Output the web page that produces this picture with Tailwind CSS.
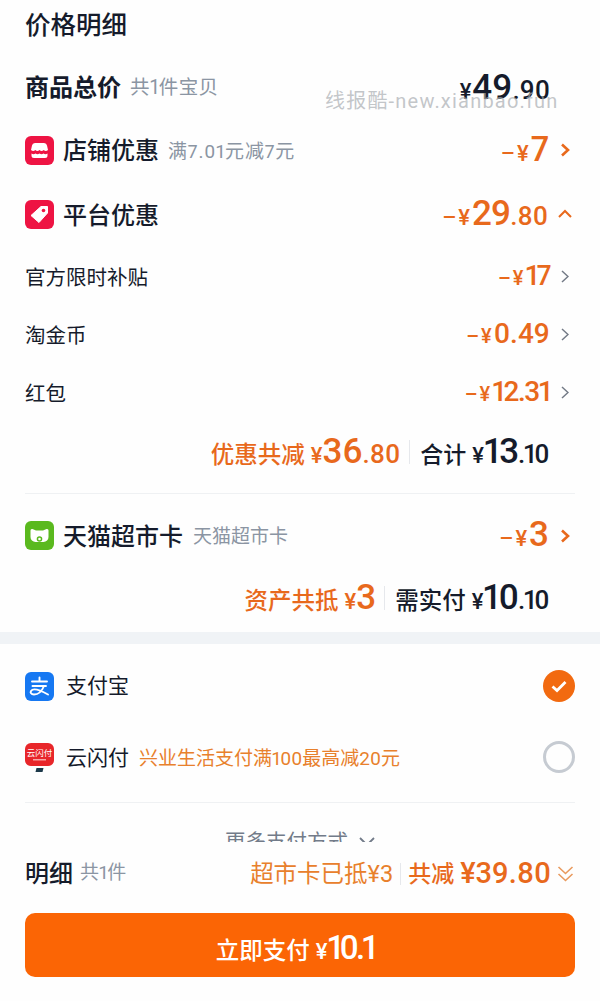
<!DOCTYPE html>
<html lang="zh-CN">
<head>
<meta charset="utf-8">
<title>价格明细</title>
<script src="https://cdn.jsdelivr.net/npm/@tailwindcss/browser@4"></script>
</head>
<body>
<div class="relative w-[600px] h-[1001px] overflow-hidden bg-[#fefefe] text-[#151b2b] proportional-nums font-['Roboto','Noto_Sans_CJK_SC',sans-serif]">

  <!-- title -->
  <div class="h-[57px] px-[25px] pb-[7px] flex items-center text-[25.500px] font-medium">价格明细</div>

  <!-- goods total -->
  <div class="h-[62px] pl-[25px] pr-[50px] flex items-center justify-between">
    <div class="flex items-center gap-[9px]">
      <span class="text-[24px] font-bold">商品总价</span>
      <span class="text-[19.500px] tracking-[0.4px] text-[#8b95a3]">共1件宝贝</span>
    </div>
    <div class="flex items-baseline font-medium">
      <span class="text-[22px] mr-px">¥</span><span class="text-[35px]">49</span><span class="text-[26px]">.90</span>
    </div>
  </div>

  <!-- shop discount -->
  <div class="h-[62px] pl-[25px] pr-[30px] flex items-center justify-between">
    <div class="flex items-center">
      <svg class="w-[29px] h-[29px] mr-[9px]" viewBox="0 0 29 29">
        <rect width="29" height="29" rx="6" fill="#ee1443"/>
        <path d="M10 7h9a3 3 0 0 1 3 2.500l1 4.500q-2.200 2-4.300 0-2.100 2-4.200 0-2.100 2-4.200 0-2.100 2-4.300 0l1-4.500a3 3 0 0 1 3-2.500z" fill="#fff"/>
        <path d="M6.500 17.500q2 1.500 4 0 2 1.500 4 0 2 1.500 4 0 2 1.500 4 0v2a2.500 2.500 0 0 1-2.500 2.500h-11a2.500 2.500 0 0 1-2.500-2.500z" fill="#fff"/>
      </svg>
      <span class="pt-[2px] text-[24px] font-medium">店铺优惠</span>
      <span class="pt-[4px] ml-[9px] text-[19px] tracking-[0.8px] text-[#8b95a3]">满7.01元减7元</span>
    </div>
    <div class="flex items-center gap-[11px] text-[#e8691c]">
      <div class="flex items-baseline font-medium">
        <span class="text-[22px] tracking-[2px]">–¥</span><span class="text-[35px]">7</span>
      </div>
      <svg class="w-[10px] h-[14px]" viewBox="0 0 10 14" fill="none" stroke="currentColor" stroke-width="2.600"><path d="M2 1.500l6 5.500-6 5.500"/></svg>
    </div>
  </div>

  <!-- platform discount -->
  <div class="h-[66px] pl-[25px] pr-[28px] flex items-center justify-between">
    <div class="flex items-center">
      <svg class="w-[29px] h-[29px] mr-[9px]" viewBox="0 0 29 29">
        <rect width="29" height="29" rx="6" fill="#ee1443"/>
        <path d="M16 6.500h6.500v6.500l-8.500 9.500-8-7z" fill="#fff" stroke="#fff" stroke-linejoin="round"/>
        <circle cx="18.500" cy="10.500" r="1.800" fill="#ee1443"/>
      </svg>
      <span class="pt-[4px] text-[24px] font-medium">平台优惠</span>
    </div>
    <div class="flex items-center gap-[10px] text-[#e8691c]">
      <div class="flex items-baseline font-medium">
        <span class="text-[22px] tracking-[2px]">–¥</span><span class="text-[35px] tracking-[-1px]">29</span><span class="text-[26px]">.80</span>
      </div>
      <svg class="w-[14px] h-[10px]" viewBox="0 0 14 10" fill="none" stroke="currentColor" stroke-width="2"><path d="M1 8l6-6 6 6"/></svg>
    </div>
  </div>

  <!-- discount details -->
  <div class="h-[58px] pl-[25px] pr-[31px] flex items-center justify-between">
    <span class="pt-[4px] text-[20.500px]">官方限时补贴</span>
    <div class="flex items-center gap-[11px] text-[#e8691c]">
      <div class="flex items-baseline font-medium"><span class="text-[20px] tracking-[2px]">–¥</span><span class="text-[28px] tracking-[-1.500px]">17</span></div>
      <svg class="w-[8px] h-[13px] text-[#737a86]" viewBox="0 0 8 13" fill="none" stroke="currentColor" stroke-width="1.500"><path d="M1 1l6 5.500-6 5.500"/></svg>
    </div>
  </div>
  <div class="h-[58px] pl-[25px] pr-[31px] flex items-center justify-between">
    <span class="pt-[4px] text-[20.500px]">淘金币</span>
    <div class="flex items-center gap-[11px] text-[#e8691c]">
      <div class="flex items-baseline font-medium"><span class="text-[20px] tracking-[2px]">–¥</span><span class="text-[28px]">0.49</span></div>
      <svg class="w-[8px] h-[13px] text-[#737a86]" viewBox="0 0 8 13" fill="none" stroke="currentColor" stroke-width="1.500"><path d="M1 1l6 5.500-6 5.500"/></svg>
    </div>
  </div>
  <div class="h-[58px] pl-[25px] pr-[31px] flex items-center justify-between">
    <span class="pt-[4px] text-[20.500px]">红包</span>
    <div class="flex items-center gap-[11px] text-[#e8691c]">
      <div class="flex items-baseline font-medium"><span class="text-[20px] tracking-[2px]">–¥</span><span class="text-[28px] tracking-[-1.500px]">12.31</span></div>
      <svg class="w-[8px] h-[13px] text-[#737a86]" viewBox="0 0 8 13" fill="none" stroke="currentColor" stroke-width="1.500"><path d="M1 1l6 5.500-6 5.500"/></svg>
    </div>
  </div>

  <!-- discount summary -->
  <div class="h-[62px] pr-[52px] flex items-center justify-end">
    <div class="flex items-baseline font-medium text-[#e8691c]">
      <span class="text-[23.500px]">优惠共减</span><span class="ml-[6px] text-[22px]">¥</span><span class="text-[35px]">36</span><span class="text-[26px]">.80</span>
    </div>
    <div class="w-px h-[24px] ml-[9px] mr-[10px] bg-[#e6e8ec]"></div>
    <div class="flex items-baseline font-medium">
      <span class="text-[23px]">合计</span><span class="ml-[6px] text-[22px]">¥</span><span class="text-[35px] tracking-[-1px]">13</span><span class="text-[26px] tracking-[-1.500px]">.10</span>
    </div>
  </div>

  <!-- tmall card -->
  <div class="mt-[10px] mx-[25px] h-[84px] pr-[5px] border-t border-[#eff1f3] flex items-center justify-between">
    <div class="flex items-center">
      <svg class="w-[29px] h-[29px] mr-[9px]" viewBox="0 0 29 29">
        <rect width="29" height="29" rx="6" fill="#5ab91e"/>
        <path d="M5.500 9.500q0-2 2-1.500l3.500 1.500h7l3.500-1.500q2-.5 2 1.500v6.500a5 5 0 0 1-5 5h-8a5 5 0 0 1-5-5z" fill="#fff"/>
        <circle cx="14.500" cy="18" r="2.800" fill="#5ab91e"/>
        <circle cx="14.500" cy="18" r="1.300" fill="#fff"/>
      </svg>
      <span class="pt-[2px] text-[24px] font-medium">天猫超市卡</span>
      <span class="pt-[4px] ml-[10px] text-[19px] text-[#8b95a3]">天猫超市卡</span>
    </div>
    <div class="flex items-center gap-[11px] text-[#e8691c]">
      <div class="flex items-baseline font-medium"><span class="text-[22px] tracking-[2px]">–¥</span><span class="text-[35px]">3</span></div>
      <svg class="w-[10px] h-[14px]" viewBox="0 0 10 14" fill="none" stroke="currentColor" stroke-width="2.600"><path d="M2 1.500l6 5.500-6 5.500"/></svg>
    </div>
  </div>

  <!-- asset summary -->
  <div class="h-[42px] pr-[52px] flex items-center justify-end">
    <div class="flex items-baseline font-medium text-[#e8691c]">
      <span class="text-[23.500px]">资产共抵</span><span class="ml-[6px] text-[22px]">¥</span><span class="text-[35px]">3</span>
    </div>
    <div class="w-px h-[24px] ml-[8px] mr-[10px] bg-[#e6e8ec]"></div>
    <div class="flex items-baseline font-medium">
      <span class="text-[23.500px]">需实付</span><span class="ml-[6px] text-[22px]">¥</span><span class="text-[35px] tracking-[-1px]">10</span><span class="text-[26px] tracking-[-1.500px]">.10</span>
    </div>
  </div>

  <div class="mt-[13px] h-[12px] bg-[#f0f3f6]"></div>

  <!-- payment methods -->
  <div class="h-[84px] pl-[25px] pr-[25px] flex items-center justify-between">
    <div class="flex items-center">
      <svg class="w-[29px] h-[29px] mr-[12px]" viewBox="0 0 29 29">
        <rect width="29" height="29" rx="6" fill="#1678f2"/>
        <path d="M7 9.500h15M14.500 5.500v4M7.500 14h13.500M19 14c-2 5-6 8.500-10 8.500-3 0-4-2-3-3.500 2-3 8-1.500 17 3.500" fill="none" stroke="#fff" stroke-width="1.900" stroke-linecap="round"/>
      </svg>
      <span class="pt-[2px] text-[21px]">支付宝</span>
    </div>
    <div class="w-[32px] h-[32px] rounded-full bg-[#f26a10] flex items-center justify-center">
      <svg class="w-[16px] h-[13px]" viewBox="0 0 16 13" fill="none" stroke="#fff" stroke-width="2.800"><path d="M1.500 6.500l4.500 4 8.500-8.500"/></svg>
    </div>
  </div>
  <div class="h-[58px] pl-[25px] pr-[25px] flex items-center justify-between">
    <div class="flex items-center">
      <svg class="w-[29px] h-[29px] mr-[12px]" viewBox="0 0 29 29">
        <path d="M6 0h17a6 6 0 0 1 6 6v11c0 4-3 6-6 6h-17c-3 0-6-2-6-6v-11a6 6 0 0 1 6-6z" fill="#e8262a"/>
        <text x="14.500" y="13" text-anchor="middle" font-size="8.500" fill="#fff" font-family="Noto Sans CJK SC">云闪付</text>
        <rect x="8" y="16" width="13" height="1.500" fill="#f7a8a8"/>
        <path d="M11.500 25h7l-1 4h-7z" fill="#1d3a4a"/>
      </svg>
      <span class="pt-[4px] text-[21px]">云闪付</span>
      <span class="pt-[4px] ml-[10px] text-[19px] text-[#e8802c]">兴业生活支付满100最高减20元</span>
    </div>
    <div class="w-[32px] h-[32px] rounded-full border-[3px] border-[#c6cbd2]"></div>
  </div>

  <div class="mt-[16px] mx-[25px] border-t border-[#eff1f3]"></div>
  <div class="mt-[24px] flex items-center justify-center gap-[11px] text-[20.500px] text-[#727b89]">
    <span>更多支付方式</span>
    <svg class="w-[16px] h-[10px]" viewBox="0 0 16 10" fill="none" stroke="currentColor" stroke-width="1.800"><path d="M1 1l7 7 7-7"/></svg>
  </div>

  <!-- fixed bottom bar -->
  <div class="absolute left-0 right-0 bottom-0 h-[159px] bg-[#fefefe] px-[25px]">
    <div class="h-[71px] pb-[8px] flex items-center justify-between">
      <div class="flex items-center gap-[7px]">
        <span class="text-[24px] font-medium">明细</span>
        <span class="text-[19px] text-[#8b95a3]">共1件</span>
      </div>
      <div class="flex items-center text-[#e8691c]">
        <span class="pt-[2px] text-[23.500px] text-[#e8802c]">超市卡已抵¥3</span>
        <div class="w-px h-[22px] mx-[7px] bg-[#e6e8ec]"></div>
        <span class="pt-[3px] text-[23px] font-medium">共减</span>
        <span class="ml-[6px] text-[29px] font-medium">¥39.80</span>
        <svg class="ml-[5px] w-[19px] h-[18px] text-[#e99a5e]" viewBox="0 0 18 18" fill="none" stroke="currentColor" stroke-width="1.600"><path d="M2 2l7 6.500 7-6.500M2 9l7 6.500 7-6.500"/></svg>
      </div>
    </div>
    <div class="h-[64px] rounded-[10px] bg-[#fb6505] text-white flex items-baseline justify-center pt-[10px] pr-[10px] font-medium">
      <span class="text-[23.500px]">立即支付</span><span class="ml-[6px] text-[22px]">¥</span><span class="text-[33px] tracking-[-3px]">10.1</span>
    </div>
  </div>

  <!-- watermark -->
  <div class="absolute left-[325px] top-[88px] text-[20px] leading-[26px] tracking-[1.200px] text-[#a9adb2]/70">线报酷-new.xianbao.fun</div>
</div>
</body>
</html>
